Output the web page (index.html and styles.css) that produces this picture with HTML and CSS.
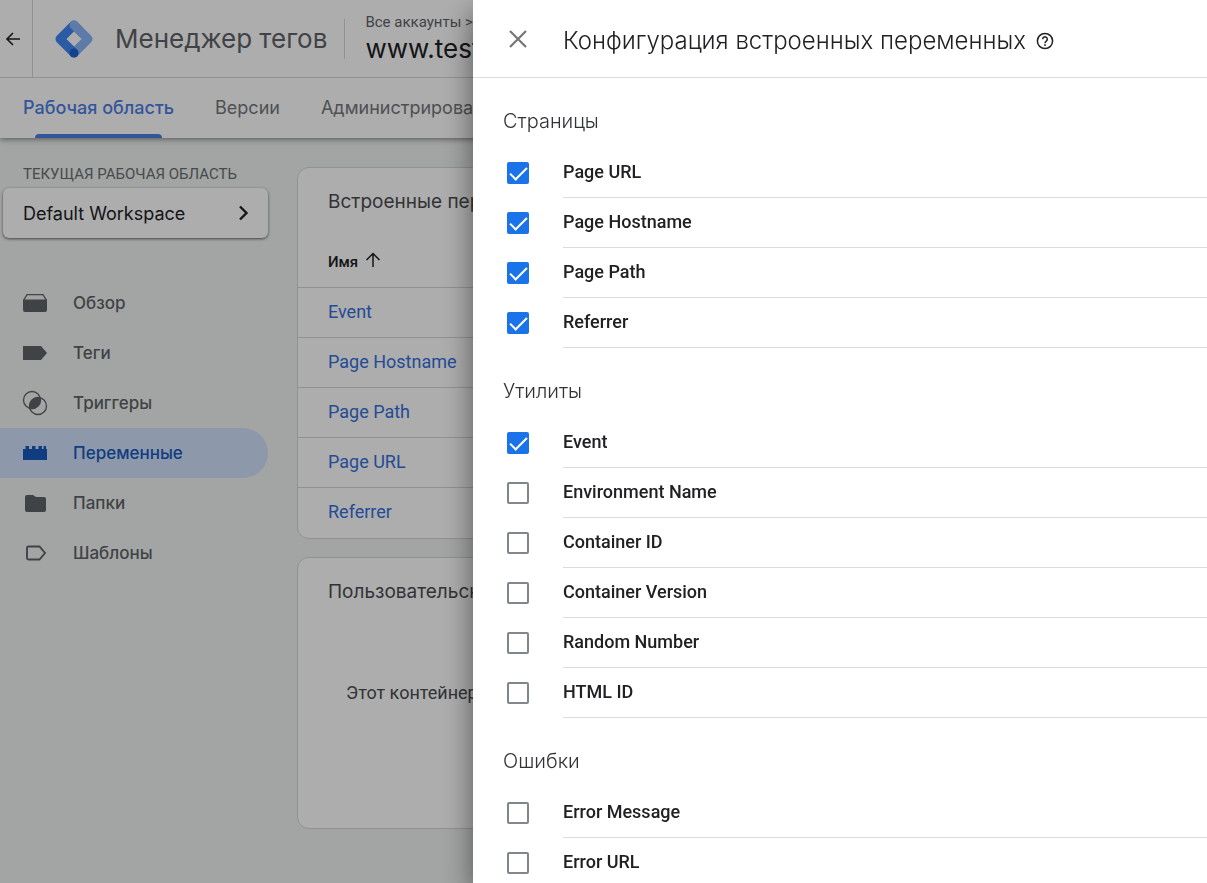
FILE: index.html
```html
<!DOCTYPE html>
<html lang="ru">
<head>
<meta charset="utf-8">
<title>Менеджер тегов</title>
<link rel="stylesheet" href="styles.css">
</head>
<body>
<div class="app">
  <header class="topbar">
    <button class="back" aria-label="Назад">
      <svg width="16" height="16" viewBox="0 0 16 16" fill="none" stroke="currentColor" stroke-width="1.6"><path d="M15 8H2M8 2L2 8l6 6"/></svg>
    </button>
    <svg class="logo" width="38" height="38" viewBox="0 0 38 38">
      <path d="M19 5L33 19 19 33" fill="none" stroke="#8ab4f8" stroke-width="9" stroke-linejoin="round" stroke-linecap="round"/>
      <path d="M19 5L5 19 19 33" fill="none" stroke="#4285f4" stroke-width="9" stroke-linejoin="round"/>
      <path d="M19 5l5 5" stroke="#8ab4f8" stroke-width="9" stroke-linecap="round"/>
      <circle cx="19" cy="33" r="4.6" fill="#1f62cf"/>
    </svg>
    <h1 class="product">Менеджер тегов</h1>
    <div class="account">
      <span class="account-path">Все аккаунты &gt;</span>
      <span class="account-name">www.test</span>
    </div>
  </header>
  <nav class="tabs">
    <a class="tab tab-active" href="#">Рабочая область</a>
    <a class="tab" href="#">Версии</a>
    <a class="tab" href="#">Администрирование</a>
  </nav>
  <div class="body">
    <aside class="sidebar">
      <div class="workspace-label">ТЕКУЩАЯ РАБОЧАЯ ОБЛАСТЬ</div>
      <button class="workspace">Default Workspace
        <svg width="12" height="16" viewBox="0 0 12 16" fill="none" stroke="currentColor" stroke-width="2.4"><path d="M2 1.5L8.5 8 2 14.5"/></svg>
      </button>
      <nav class="menu">
        <a class="item" href="#"><svg width="26" height="26" viewBox="0 0 26 26"><path d="M1 9.500h24V20q0 2-2 2H3q-2 0-2-2z" fill="currentColor"/><path d="M1.500 10.500L5 4.700h16l3.500 5.800" fill="none" stroke="currentColor" stroke-width="1.300"/></svg>Обзор</a>
        <a class="item" href="#"><svg width="26" height="26" viewBox="0 0 26 26"><path d="M1 6h18l6 7-6 7H1z" fill="currentColor"/></svg>Теги</a>
        <a class="item" href="#"><svg width="26" height="26" viewBox="0 0 26 26"><g fill="none" stroke="currentColor" stroke-width="1.300"><circle cx="10" cy="10" r="8.500"/><circle cx="16" cy="16" r="8.500"/></g><path d="M18.300 7.700A8.500 8.500 0 0 1 7.700 18.300 8.500 8.500 0 0 1 18.300 7.700z" fill="currentColor"/></svg>Триггеры</a>
        <a class="item item-active" href="#"><svg width="26" height="26" viewBox="0 0 26 26"><path d="M1 9h2.500V6h3.500v3h3V6h3.500v3h3V6H20v3h1.500V6H24v3h1v11H1z" fill="currentColor"/></svg>Переменные</a>
        <a class="item" href="#"><svg width="26" height="26" viewBox="0 0 26 26"><path d="M5 5h6l3 2h8q2 0 2 2v11q0 2-2 2H5q-2 0-2-2V7q0-2 2-2z" fill="currentColor"/></svg>Папки</a>
        <a class="item" href="#"><svg width="26" height="26" viewBox="0 0 26 26"><path d="M6.500 6.500h11l5.500 6.500-5.500 6.500h-11q-1.500 0-1.500-1.500V8Q5 6.500 6.500 6.500z" fill="none" stroke="currentColor" stroke-width="1.900"/></svg>Шаблоны</a>
      </nav>
    </aside>
    <main class="content">
      <section class="card">
        <h2 class="card-title">Встроенные переменные</h2>
        <table class="table">
          <thead><tr><th>Имя <svg width="16" height="16" viewBox="0 0 16 16" fill="none" stroke="currentColor" stroke-width="1.500"><path d="M8 15V2M1.500 8L8 1.500 14.500 8"/></svg></th></tr></thead>
          <tbody>
            <tr><td><a href="#">Event</a></td></tr>
            <tr><td><a href="#">Page Hostname</a></td></tr>
            <tr><td><a href="#">Page Path</a></td></tr>
            <tr><td><a href="#">Page URL</a></td></tr>
            <tr><td><a href="#">Referrer</a></td></tr>
          </tbody>
        </table>
      </section>
      <section class="card">
        <h2 class="card-title">Пользовательские</h2>
        <p class="empty">Этот контейнер</p>
      </section>
    </main>
  </div>
</div>
<div class="scrim">
  <div class="drawer" role="dialog" aria-labelledby="drawer-title">
    <header class="drawer-head">
      <button class="close" aria-label="Закрыть"><svg width="18" height="18" viewBox="0 0 18 18" fill="none" stroke="currentColor" stroke-width="2.200"><path d="M1 1l16 16M17 1L1 17"/></svg></button>
      <h2 class="drawer-title" id="drawer-title">Конфигурация встроенных переменных</h2>
      <button class="help" aria-label="Справка"><svg width="18" height="18" viewBox="0 0 18 18" fill="none" stroke="currentColor" stroke-width="1.500"><circle cx="9" cy="9" r="7.600"/><path d="M6.700 7.200a2.300 2.300 0 1 1 3.600 1.900Q9 10 9 11.200"/><path d="M9 12.300v1.600"/></svg></button>
    </header>
    <section class="group">
      <h3 class="group-title">Страницы</h3>
      <label class="row"><input type="checkbox" checked><span>Page URL</span></label>
      <label class="row"><input type="checkbox" checked><span>Page Hostname</span></label>
      <label class="row"><input type="checkbox" checked><span>Page Path</span></label>
      <label class="row"><input type="checkbox" checked><span>Referrer</span></label>
    </section>
    <section class="group">
      <h3 class="group-title">Утилиты</h3>
      <label class="row"><input type="checkbox" checked><span>Event</span></label>
      <label class="row"><input type="checkbox"><span>Environment Name</span></label>
      <label class="row"><input type="checkbox"><span>Container ID</span></label>
      <label class="row"><input type="checkbox"><span>Container Version</span></label>
      <label class="row"><input type="checkbox"><span>Random Number</span></label>
      <label class="row"><input type="checkbox"><span>HTML ID</span></label>
    </section>
    <section class="group">
      <h3 class="group-title">Ошибки</h3>
      <label class="row"><input type="checkbox"><span>Error Message</span></label>
      <label class="row"><input type="checkbox"><span>Error URL</span></label>
    </section>
  </div>
</div>
</body>
</html>
```
FILE: styles.css
```css
* { box-sizing: border-box; }
body {
  margin: 0;
  height: 100vh;
  overflow: hidden;
  background: #f0f3f2;
  color: #202124;
  font-family: Roboto, "Liberation Sans", sans-serif;
  font-size: 18px;
}
h1, h2, h3, p { margin: 0; font-weight: 400; }
a { text-decoration: none; color: inherit; }
button { border: 0; padding: 0; background: none; font: inherit; color: inherit; }
svg { display: block; flex: none; }

.topbar {
  position: relative;
  z-index: 1;
  display: flex;
  align-items: center;
  height: 78px;
  background: #fff;
  border-bottom: 1px solid #d5d6d8;
  white-space: nowrap;
}
.back {
  display: flex;
  align-items: center;
  justify-content: flex-end;
  width: 33px;
  height: 100%;
  padding-right: 11px;
  border-right: 1px solid #d5d6d8;
}
.logo { margin-left: 22px; }
.product {
  margin-left: 22px;
  font-family: Inter, sans-serif;
  font-size: 26px;
  color: #5f6368;
}
.account {
  display: flex;
  flex-direction: column;
  justify-content: center;
  height: 40px;
  margin-left: 17px;
  padding: 0 0 2px 20px;
  border-left: 1px solid #d5d6d8;
}
.account-path { font-size: 15px; line-height: 22px; color: #5f6368; }
.account-name { font-family: Inter, sans-serif; font-size: 26px; line-height: 32px; }

.tabs {
  display: flex;
  gap: 41px;
  height: 60px;
  padding-left: 23px;
  background: #fff;
  box-shadow: 0 1px 6px rgba(0, 0, 0, .5);
  font-family: Inter, sans-serif;
  font-size: 18px;
  line-height: 60px;
  color: #74777b;
  white-space: nowrap;
}
.tab-active { position: relative; color: #4c7ee6; font-weight: 500; }
.tab-active::after {
  content: "";
  position: absolute;
  left: 12px;
  right: 12px;
  bottom: 0;
  height: 4px;
  border-radius: 4px 4px 0 0;
  background: #4c7ee6;
}

.body { display: flex; }
.sidebar { flex: none; width: 268px; padding-top: 24px; }
.workspace-label { padding-left: 23px; font-size: 15px; line-height: 24px; color: #6a6d71; }
.workspace {
  display: flex;
  align-items: center;
  justify-content: space-between;
  width: 265px;
  height: 50px;
  margin: 2px 0 0 3px;
  padding: 0 18px 0 20px;
  border-radius: 6px;
  background: #fff;
  box-shadow: 0 1px 3px rgba(0, 0, 0, .6);
  font-family: Inter, sans-serif;
  font-size: 18px;
}
.menu { margin-top: 40px; }
.item {
  display: flex;
  align-items: center;
  gap: 25px;
  height: 50px;
  padding-left: 22px;
  border-radius: 0 25px 25px 0;
  font-family: Inter, sans-serif;
  font-size: 17px;
  font-weight: 500;
  color: #5f6368;
}
.item-active { background: #d2e0fc; color: #185abc; }

.content { flex: 1; display: flex; flex-direction: column; gap: 18px; padding: 29px 24px 0 29px; }
.card {
  min-height: 272px;
  border: 1px solid #d5d6d8;
  border-radius: 12px;
  background: #fff;
  white-space: nowrap;
  overflow: hidden;
}
.card-title {
  padding: 19px 30px 0;
  font-family: Inter, sans-serif;
  font-size: 19px;
  line-height: 30px;
  color: #4a4c50;
}
.table { width: 100%; border-collapse: collapse; }
th { height: 70px; padding: 20px 30px 0; text-align: left; font-size: 15px; font-weight: 500; }
th svg { display: inline-block; margin-left: 3px; vertical-align: -1px; }
td { height: 50px; padding: 0 30px 2px; border-top: 1px solid #d5d6d8; color: #3470dd; }
.table + * { margin: 0; }
.card:first-child { min-height: 372px; }
.empty { padding: 71px 48px 0; line-height: 30px; color: #4a4c50; }

.scrim { position: fixed; inset: 0; z-index: 2; display: flex; padding-left: 473px; background: rgba(0, 0, 0, .32); }
.drawer { flex: 1; min-width: 0; overflow: hidden; background: #fff; box-shadow: 0 12px 28px rgba(0, 0, 0, .5); }
.drawer-head { display: flex; align-items: center; height: 78px; padding-left: 36px; border-bottom: 1px solid #dadce0; white-space: nowrap; }
.close { color: #757575; }
.drawer-title { margin-left: 36px; padding-top: 3px; font-family: Inter, sans-serif; font-size: 24px; font-weight: 300; }
.help { margin-left: 10px; padding-top: 4px; }
.group-title { padding: 28px 30px 12px; font-family: Inter, sans-serif; font-size: 20px; line-height: 30px; font-weight: 300; color: #303236; }
.row { display: flex; align-items: center; height: 50px; padding-left: 34px; font-weight: 500; }
.row span { flex: 1; height: 50px; margin-left: 34px; border-bottom: 1px solid #dadce0; line-height: 48px; }
.row input {
  appearance: none;
  flex: none;
  width: 22px;
  height: 22px;
  margin: 0;
  border: 2px solid #80868b;
  border-radius: 2px;
}
.row input:checked { display: grid; place-items: center; border-color: #1a73e8; background: #1a73e8; }
.row input:checked::before {
  content: "";
  width: 15px;
  height: 7px;
  margin-bottom: 4px;
  border: solid #fff;
  border-width: 0 0 2px 2px;
  transform: rotate(-45deg);
}
```
